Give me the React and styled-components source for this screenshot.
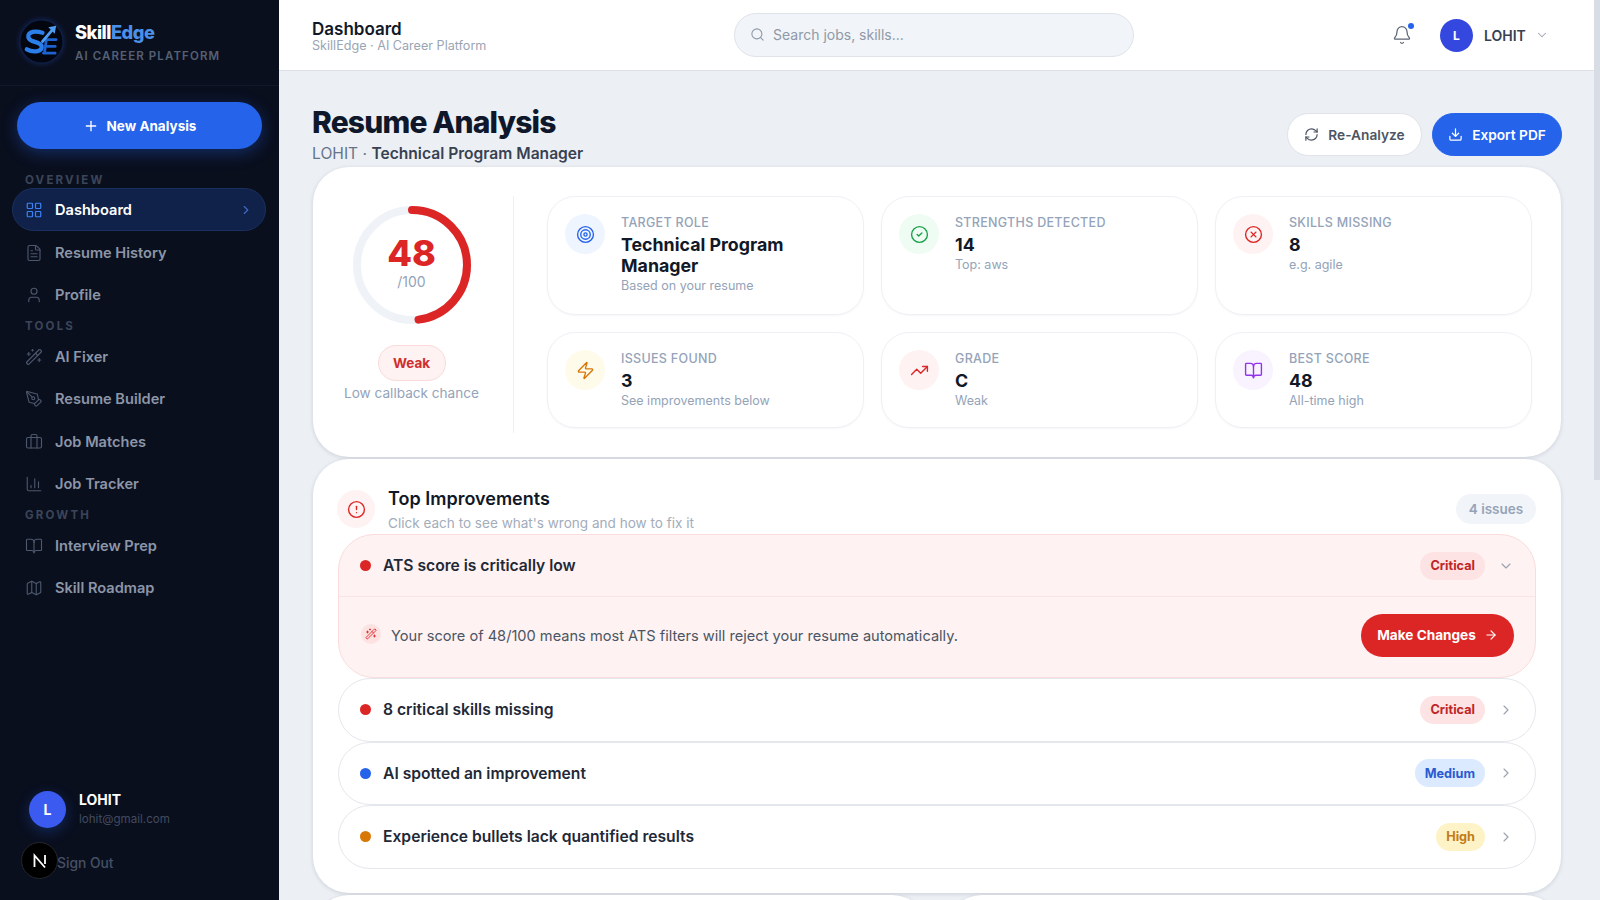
import React from "react";
import styled, { createGlobalStyle } from "styled-components";
import {
  Plus, LayoutGrid, FileText, User, Wand2, PenTool, Briefcase, BarChart3, BookOpen, Map, ChevronRight, ChevronDown,
  Search, Bell, RefreshCw, Download, Target, CheckCircle2, XCircle, Zap, TrendingUp, AlertCircle, ArrowRight, WandSparkles,
} from "lucide-react";

const Global = createGlobalStyle`
  * { box-sizing: border-box; }
  html, body { margin: 0; height: 100%; overflow: hidden; }
  body { font-family: Inter, "Liberation Sans", sans-serif; background: #ecf0f5; }
`;

const Shell = styled.div`
  display: flex;
  width: 1600px;
  height: 900px;
  overflow: hidden;
  position: relative;
`;

const Sidebar = styled.aside`
  width: 279px;
  flex: none;
  height: 900px;
  background: #0a0f1e;
  display: flex;
  flex-direction: column;
  position: relative;
`;

const Brand = styled.div`
  height: 86px;
  padding: 20px 20px 0;
  display: flex;
  gap: 12px;
  border-bottom: 1px solid #111829;
`;

const BrandText = styled.div`
  padding-top: 2px;
`;

const BrandName = styled.div`
  font-size: 18.3px;
  font-weight: 800;
  letter-spacing: -0.5px;
  line-height: 20px;
  color: #fff;
  span { color: #4a90e8; }
`;

const BrandSub = styled.div`
  margin-top: 7px;
  font-size: 11.5px;
  font-weight: 600;
  letter-spacing: 1.1px;
  line-height: 14px;
  color: #566073;
`;

const NewBtn = styled.button`
  margin: 16px 17px 0;
  width: 245px;
  height: 47px;
  flex: none;
  border: none;
  border-radius: 24px;
  background: #2563eb;
  box-shadow: 0 4px 16px rgba(37, 99, 235, 0.35);
  color: #fff;
  font: 700 13.5px Inter, sans-serif;
  display: flex;
  align-items: center;
  justify-content: center;
  gap: 8px;
`;

const Nav = styled.nav`
  display: flex;
  flex-direction: column;
  padding: 0 13px;
`;

const Section = styled.div`
  height: ${(p) => p.$h}px;
  padding: ${(p) => p.$t}px 12px 0;
  font-size: 11.5px;
  font-weight: 700;
  letter-spacing: 2.2px;
  line-height: 14px;
  color: #3b4559;
`;

const Item = styled.div`
  height: 42.5px;
  padding: 1px 12px 0;
  border-radius: 22px;
  display: flex;
  align-items: center;
  gap: 12px;
  font-size: 14.6px;
  font-weight: 600;
  color: #8c96a8;
  svg { flex: none; color: #4d586c; }
`;

const ActiveItem = styled(Item)`
  height: 43px;
  margin: 0 0 0 -1px;
  padding: 0 12px;
  color: #fff;
  background: #10224a;
  border: 1px solid #1a3060;
  svg:first-child { color: #3b82f6; }
  svg:last-child { color: #3b6cc4; margin-left: auto; }
`;

const UserBox = styled.div`
  margin-top: auto;
  height: 109px;
  padding: 0 29px;
  display: flex;
  gap: 13px;
`;

const SideAvatar = styled.div`
  width: 37px;
  height: 37px;
  border-radius: 50%;
  background: #3b5bf0;
  box-shadow: 0 4px 14px rgba(37, 99, 235, 0.3);
  color: #fff;
  font-size: 14px;
  font-weight: 700;
  display: flex;
  align-items: center;
  justify-content: center;
`;

const UserName = styled.div`
  margin-top: 0;
  font-size: 14px;
  font-weight: 700;
  line-height: 17px;
  color: #fff;
`;

const UserMail = styled.div`
  margin-top: 3px;
  font-size: 11.6px;
  line-height: 16px;
  color: #414b5e;
`;

const SignOut = styled.div`
  position: absolute;
  left: 57px;
  top: 854px;
  font-size: 13.8px;
  font-weight: 500;
  line-height: 18px;
  color: #465064;
`;

const DevBadge = styled.div`
  position: absolute;
  left: 21px;
  top: 842px;
  width: 37px;
  height: 37px;
  border-radius: 50%;
  background: #000;
  border: 1px solid #23262e;
  color: #fff;
  display: flex;
  align-items: center;
  justify-content: center;
  font-size: 0;
`;

const Content = styled.div`
  width: 1315px;
  flex: none;
  display: flex;
  flex-direction: column;
`;

const Topbar = styled.header`
  height: 71px;
  flex: none;
  background: #fff;
  border-bottom: 1px solid #dde1e7;
  padding: 0 0 0 33px;
  display: flex;
  align-items: center;
`;

const TopTitle = styled.div`
  width: 422px;
  padding-top: 3px;
`;

const TopH = styled.div`
  font-size: 17px;
  font-weight: 600;
  line-height: 20px;
  color: #111827;
`;

const TopS = styled.div`
  margin-top: -1px;
  font-size: 12.6px;
  font-weight: 400;
  line-height: 16px;
  color: #9aa5b4;
`;

const SearchBox = styled.div`
  width: 400px;
  height: 44px;
  border-radius: 22px;
  background: #f1f4f8;
  border: 1px solid #dfe3e9;
  padding: 0 15px 1px;
  display: flex;
  align-items: center;
  gap: 8px;
  font-size: 14px;
  color: #8f99a8;
  svg { color: #8f99a8; }
`;

const TopRight = styled.div`
  margin-left: 258px;
  display: flex;
  align-items: center;
`;

const BellWrap = styled.div`
  position: relative;
  width: 20px;
  height: 20px;
  margin-right: 28px;
  color: #5c6675;
`;

const BellDot = styled.span`
  position: absolute;
  top: -2px;
  right: -2px;
  width: 6px;
  height: 6px;
  border-radius: 50%;
  background: #2563eb;
`;

const TopAvatar = styled(SideAvatar)`
  width: 33px;
  height: 33px;
  font-size: 12px;
  background: #3448e0;
  box-shadow: none;
`;

const TopName = styled.span`
  margin-left: 11px;
  font-size: 14px;
  font-weight: 600;
  color: #374151;
`;

const TopChevron = styled(ChevronDown)`
  margin-left: 9px;
  color: #9ca3af;
`;

const Main = styled.main`
  flex: 1;
  padding: 0 33px 0 34px;
  overflow: hidden;
`;

const Head = styled.div`
  height: 96px;
  padding-top: 35px;
  margin-left: -1px;
  display: flex;
  justify-content: space-between;
`;

const H1 = styled.h1`
  margin: 0;
  font-size: 30px;
  font-weight: 800;
  letter-spacing: -0.85px;
  line-height: 33px;
  color: #0f172a;
`;

const HeadSub = styled.div`
  margin-top: 5px;
  font-size: 15.6px;
  line-height: 20px;
  color: #64748b;
  b { font-weight: 600; color: #374151; }
`;

const HeadBtns = styled.div`
  display: flex;
  gap: 10px;
  padding-top: 7px;
  margin-right: -1px;
`;

const GhostBtn = styled.button`
  width: 135px;
  height: 43px;
  border-radius: 22px;
  background: #fff;
  border: 1px solid #dfe3e9;
  color: #4b5563;
  font: 600 13.7px Inter, sans-serif;
  display: flex;
  align-items: center;
  justify-content: center;
  gap: 9px;
`;

const PrimaryBtn = styled(GhostBtn)`
  width: 130px;
  background: #2563eb;
  border-color: #2563eb;
  color: #fff;
`;

const Card = styled.section`
  width: 1248px;
  background: #fff;
  border-radius: 36px;
  box-shadow: 0 1px 4px rgba(15, 23, 42, 0.14);
  margin-bottom: 2px;
`;

const ScoreCard = styled(Card)`
  height: 290px;
  padding: 29px 30px;
  display: flex;
`;

const ScoreCol = styled.div`
  width: 171px;
  flex: none;
  border-right: 1px solid #eef0f4;
  margin-right: 33px;
  height: 237px;
  display: flex;
  flex-direction: column;
  align-items: center;
  padding-right: 33px;
`;

const Gauge = styled.div`
  margin-top: 10px;
  width: 118px;
  height: 118px;
  flex: none;
  position: relative;
  display: flex;
  flex-direction: column;
  align-items: center;
  justify-content: center;
  padding-bottom: 5px;
`;

const GaugeSvg = styled.svg`
  position: absolute;
  inset: 0;
`;

const GaugeNum = styled.div`
  font-size: 36px;
  font-weight: 800;
  line-height: 38px;
  color: #dc2626;
`;

const GaugeOf = styled.div`
  margin-top: 1px;
  font-size: 14px;
  line-height: 18px;
  color: #94a3b8;
`;

const WeakPill = styled.div`
  margin-top: 21px;
  width: 68px;
  height: 36px;
  border-radius: 18px;
  background: #fef2f2;
  border: 1px solid #fbdada;
  color: #cf2e2e;
  font-size: 13.5px;
  font-weight: 700;
  display: flex;
  align-items: center;
  justify-content: center;
`;

const Callback = styled.div`
  margin-top: 3px;
  font-size: 13.6px;
  line-height: 18px;
  white-space: nowrap;
  color: #94a3b8;
`;

const StatGrid = styled.div`
  flex: 1;
  display: grid;
  grid-template-columns: repeat(3, 317px);
  grid-template-rows: 119px 96px;
  gap: 17px;
`;

const Stat = styled.div`
  border: 1px solid #eef0f4;
  border-radius: 28px;
  box-shadow: 0 1px 2px rgba(15, 23, 42, 0.04);
  padding: 17px 17px;
  display: flex;
  gap: 16px;
`;

const StatIcon = styled.div`
  width: 40px;
  height: 40px;
  flex: none;
  border-radius: 50%;
  background: ${(p) => p.$bg};
  color: ${(p) => p.$c};
  display: flex;
  align-items: center;
  justify-content: center;
`;

const StatLabel = styled.div`
  margin-top: 1px;
  font-size: 12.5px;
  font-weight: 500;
  letter-spacing: 0.3px;
  line-height: 16px;
  color: #94a3b8;
`;

const StatValue = styled.div`
  font-size: 17.8px;
  font-weight: 700;
  line-height: 21px;
  margin-top: 3px;
  color: #111827;
`;

const StatSub = styled.div`
  margin-top: 1px;
  font-size: 12.5px;
  line-height: 17px;
  color: #94a3b8;
`;

const ImproveCard = styled(Card)`
  height: 434px;
  padding: 27px 25px 0;
  margin-top: 0;
`;

const ImproveHead = styled.div`
  height: 48px;
  display: flex;
  gap: 13px;
  align-items: flex-start;
`;

const ImproveIcon = styled(StatIcon)`
  width: 38px;
  height: 38px;
  margin-top: 4px;
  margin-left: -1px;
`;

const ImproveH = styled.div`
  font-size: 18px;
  font-weight: 600;
  line-height: 24px;
  margin-top: 1px;
  color: #111827;
`;

const ImproveS = styled.div`
  font-size: 13.55px;
  line-height: 17px;
  margin-top: 4px;
  color: #a3adba;
`;

const IssuesPill = styled.div`
  margin-left: auto;
  margin-top: 8px;
  width: 80px;
  height: 30px;
  border-radius: 15px;
  background: #f1f4f8;
  color: #94a3b8;
  font-size: 13.5px;
  font-weight: 600;
  display: flex;
  align-items: center;
  justify-content: center;
`;

const OpenRow = styled.div`
  height: 144px;
  background: #fef2f2;
  border: 1px solid #fadcdc;
  border-radius: 36px;
`;

const RowHead = styled.div`
  height: ${(p) => (p.$line ? 62 : 61)}px;
  padding: 0 21px;
  display: flex;
  align-items: center;
  border-bottom: ${(p) => (p.$line ? "1px solid #fde4e4" : "none")};
`;

const ClosedRow = styled.div`
  height: 63.5px;
  border: 1px solid #e4e7ec;
  border-radius: 36px;
  background: #fff;
`;

const Dot = styled.span`
  width: 11px;
  height: 11px;
  border-radius: 50%;
  background: ${(p) => p.$c};
  margin-right: 12px;
`;

const RowText = styled.span`
  font-size: 15.65px;
  font-weight: 600;
  color: #1f2937;
`;

const Badge = styled.span`
  margin-left: auto;
  height: 28px;
  padding: 0 10px;
  border-radius: 14px;
  background: ${(p) => p.$bg};
  color: ${(p) => p.$c};
  font-size: 12.7px;
  font-weight: 700;
  display: flex;
  align-items: center;
`;

const RowChevron = styled.span`
  margin-left: 13px;
  margin-right: 0;
  width: 16px;
  color: #9ca3af;
  display: flex;
`;

const FixLine = styled.div`
  height: 80px;
  padding: 0 21px 4px 22px;
  display: flex;
  align-items: center;
`;

const FixIcon = styled.span`
  width: 20px;
  height: 20px;
  border-radius: 50%;
  background: #fde2e2;
  color: #dc2626;
  display: flex;
  align-items: center;
  justify-content: center;
  margin-right: 10px;
  margin-top: -3px;
`;

const FixText = styled.span`
  margin-top: 1px;
  font-size: 14.6px;
  color: #4b5563;
`;

const FixBtn = styled.button`
  margin-left: auto;
  width: 153px;
  height: 43px;
  border: none;
  border-radius: 22px;
  background: #dc2626;
  color: #fff;
  font: 700 13.6px Inter, sans-serif;
  display: flex;
  align-items: center;
  justify-content: center;
  gap: 8px;
`;

const BottomRow = styled.div`
  display: flex;
  gap: 18px;
  width: 1248px;
  margin-top: 0;
`;

const BottomCard = styled(Card)`
  flex: 1;
  height: 120px;
  border-radius: 36px;
`;

const Scrollbar = styled.div`
  width: 6px;
  flex: none;
  background: #ecf0f5;
  position: relative;
`;

const Thumb = styled.div`
  position: absolute;
  top: 0;
  left: 0;
  right: 0;
  height: 480px;
  background: #d8dde5;
`;

const LogoSvg = styled.svg`
  flex: none;
  filter: drop-shadow(0 0 3px rgba(37, 99, 235, 0.45));
`;

const Logo = () => (
  <LogoSvg width="43" height="43" viewBox="0 0 44 44">
    <circle cx="22" cy="22" r="21.5" fill="#03060f" />
    <path d="M23 13 C12 10 6 14 9.5 19.5 C12 23 20 22 22 26.5 C24 32 14 34 7 30" fill="none" stroke="#2b7fea" strokeWidth="4.4" strokeLinecap="round" />
    <path d="M26 20 L37 20 M25.5 27 L36 27 M24 34 L36 34 M27 20 L25 34" fill="none" stroke="#1c62d0" strokeWidth="2.8" strokeLinecap="round" />
    <path d="M23 22 L34 9" fill="none" stroke="#4f9df3" strokeWidth="2.8" strokeLinecap="round" />
    <path d="M29 7.5 L37 6 L35.5 14 Z" fill="#4f9df3" />
  </LogoSvg>
);

const navs = {
  overview: [
    [FileText, "Resume History"],
    [User, "Profile"],
  ],
  tools: [
    [Wand2, "AI Fixer"],
    [PenTool, "Resume Builder"],
    [Briefcase, "Job Matches"],
    [BarChart3, "Job Tracker"],
  ],
  growth: [
    [BookOpen, "Interview Prep"],
    [Map, "Skill Roadmap"],
  ],
};

const NavItem = ({ icon: Icon, label }) => (
  <Item>
    <Icon size={18} strokeWidth={1.5} />
    {label}
  </Item>
);

const stats = [
  { I: Target, bg: "#eff5ff", c: "#2563eb", l: "TARGET ROLE", v: "Technical Program Manager", s: "Based on your resume" },
  { I: CheckCircle2, bg: "#effcf4", c: "#16a34a", l: "STRENGTHS DETECTED", v: "14", s: "Top: aws" },
  { I: XCircle, bg: "#fef2f2", c: "#dc2626", l: "SKILLS MISSING", v: "8", s: "e.g. agile" },
  { I: Zap, bg: "#fffbeb", c: "#d97706", l: "ISSUES FOUND", v: "3", s: "See improvements below" },
  { I: TrendingUp, bg: "#fef2f2", c: "#dc2626", l: "GRADE", v: "C", s: "Weak" },
  { I: BookOpen, bg: "#f8f3ff", c: "#9333ea", l: "BEST SCORE", v: "48", s: "All-time high" },
];

const rows = [
  { dot: "#dc2626", t: "8 critical skills missing", b: "Critical", bg: "#fde3e3", c: "#c02626" },
  { dot: "#2563eb", t: "AI spotted an improvement", b: "Medium", bg: "#dbeafe", c: "#2b5bd0" },
  { dot: "#d97706", t: "Experience bullets lack quantified results", b: "High", bg: "#fef3c7", c: "#c27c18" },
];

export default function App() {
  return (
    <Shell>
      <Global />
      <Sidebar>
        <Brand>
          <Logo />
          <BrandText>
            <BrandName>Skill<span>Edge</span></BrandName>
            <BrandSub>AI CAREER PLATFORM</BrandSub>
          </BrandText>
        </Brand>
        <NewBtn><Plus size={16} strokeWidth={2} />New Analysis</NewBtn>
        <Nav>
          <Section $h={39} $t={24}>OVERVIEW</Section>
          <ActiveItem>
            <LayoutGrid size={18} strokeWidth={1.6} />
            Dashboard
            <ChevronRight size={14} strokeWidth={2} />
          </ActiveItem>
          {navs.overview.map(([I, l]) => <NavItem key={l} icon={I} label={l} />)}
          <Section $h={19} $t={3}>TOOLS</Section>
          {navs.tools.map(([I, l]) => <NavItem key={l} icon={I} label={l} />)}
          <Section $h={19} $t={3}>GROWTH</Section>
          {navs.growth.map(([I, l]) => <NavItem key={l} icon={I} label={l} />)}
        </Nav>
        <UserBox>
          <SideAvatar>L</SideAvatar>
          <div>
            <UserName>LOHIT</UserName>
            <UserMail>lohit@gmail.com</UserMail>
          </div>
        </UserBox>
        <SignOut>Sign Out</SignOut>
        <DevBadge>
          <svg width="18" height="18" viewBox="0 0 18 18"><path d="M3.5 15V3.5L14 15.5M14 3v9" fill="none" stroke="#fff" strokeWidth="1.8" /></svg>
        </DevBadge>
      </Sidebar>
      <Content>
        <Topbar>
          <TopTitle>
            <TopH>Dashboard</TopH>
            <TopS>SkillEdge · AI Career Platform</TopS>
          </TopTitle>
          <SearchBox><Search size={15} strokeWidth={1.75} />Search jobs, skills...</SearchBox>
          <TopRight>
            <BellWrap>
              <Bell size={20} strokeWidth={1.5} />
              <BellDot />
            </BellWrap>
            <TopAvatar>L</TopAvatar>
            <TopName>LOHIT</TopName>
            <TopChevron size={14} strokeWidth={1.75} />
          </TopRight>
        </Topbar>
        <Main>
          <Head>
            <div>
              <H1>Resume Analysis</H1>
              <HeadSub>LOHIT · <b>Technical Program Manager</b></HeadSub>
            </div>
            <HeadBtns>
              <GhostBtn><RefreshCw size={15} strokeWidth={1.9} />Re-Analyze</GhostBtn>
              <PrimaryBtn><Download size={15} strokeWidth={2} />Export PDF</PrimaryBtn>
            </HeadBtns>
          </Head>
          <ScoreCard>
            <ScoreCol>
              <Gauge>
                <GaugeSvg width="118" height="118" viewBox="0 0 118 118">
                  <circle cx="59" cy="59" r="55" fill="none" stroke="#eff3f8" strokeWidth="8" />
                  <circle cx="59" cy="59" r="55" fill="none" stroke="#dc2626" strokeWidth="8" strokeLinecap="round" strokeDasharray="165.9 345.6" transform="rotate(-90 59 59)" />
                </GaugeSvg>
                <GaugeNum>48</GaugeNum>
                <GaugeOf>/100</GaugeOf>
              </Gauge>
              <WeakPill>Weak</WeakPill>
              <Callback>Low callback chance</Callback>
            </ScoreCol>
            <StatGrid>
              {stats.map(({ I, bg, c, l, v, s }) => (
                <Stat key={l}>
                  <StatIcon $bg={bg} $c={c}><I size={19} strokeWidth={1.75} /></StatIcon>
                  <div>
                    <StatLabel>{l}</StatLabel>
                    <StatValue>{v}</StatValue>
                    <StatSub>{s}</StatSub>
                  </div>
                </Stat>
              ))}
            </StatGrid>
          </ScoreCard>
          <ImproveCard>
            <ImproveHead>
              <ImproveIcon $bg="#fef2f2" $c="#dc2626"><AlertCircle size={19} strokeWidth={1.75} /></ImproveIcon>
              <div>
                <ImproveH>Top Improvements</ImproveH>
                <ImproveS>Click each to see what's wrong and how to fix it</ImproveS>
              </div>
              <IssuesPill>4 issues</IssuesPill>
            </ImproveHead>
            <OpenRow>
              <RowHead $line>
                <Dot $c="#dc2626" />
                <RowText>ATS score is critically low</RowText>
                <Badge $bg="#fde3e3" $c="#c02626">Critical</Badge>
                <RowChevron><ChevronDown size={16} strokeWidth={1.75} /></RowChevron>
              </RowHead>
              <FixLine>
                <FixIcon><WandSparkles size={12} strokeWidth={1.75} /></FixIcon>
                <FixText>Your score of 48/100 means most ATS filters will reject your resume automatically.</FixText>
                <FixBtn>Make Changes <ArrowRight size={14} strokeWidth={2} /></FixBtn>
              </FixLine>
            </OpenRow>
            {rows.map((r) => (
              <ClosedRow key={r.t}>
                <RowHead>
                  <Dot $c={r.dot} />
                  <RowText>{r.t}</RowText>
                  <Badge $bg={r.bg} $c={r.c}>{r.b}</Badge>
                  <RowChevron><ChevronRight size={16} strokeWidth={1.75} /></RowChevron>
                </RowHead>
              </ClosedRow>
            ))}
          </ImproveCard>
          <BottomRow>
            <BottomCard />
            <BottomCard />
          </BottomRow>
        </Main>
      </Content>
      <Scrollbar><Thumb /></Scrollbar>
    </Shell>
  );
}
